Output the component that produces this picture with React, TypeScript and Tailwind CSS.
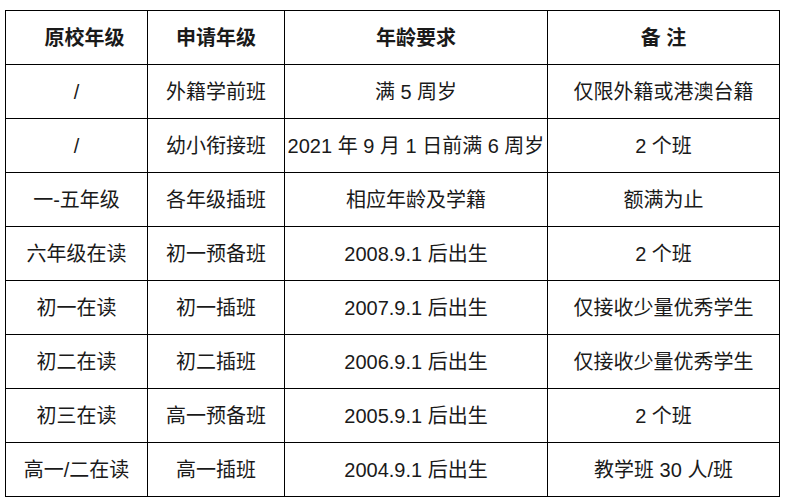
const rows: string[][] = [
  ["/", "外籍学前班", "满 5 周岁", "仅限外籍或港澳台籍"],
  ["/", "幼小衔接班", "2021 年 9 月 1 日前满 6 周岁", "2 个班"],
  ["一-五年级", "各年级插班", "相应年龄及学籍", "额满为止"],
  ["六年级在读", "初一预备班", "2008.9.1 后出生", "2 个班"],
  ["初一在读", "初一插班", "2007.9.1 后出生", "仅接收少量优秀学生"],
  ["初二在读", "初二插班", "2006.9.1 后出生", "仅接收少量优秀学生"],
  ["初三在读", "高一预备班", "2005.9.1 后出生", "2 个班"],
  ["高一/二在读", "高一插班", "2004.9.1 后出生", "教学班 30 人/班"],
];

const headers = ["原校年级", "申请年级", "年龄要求", "备 注"];

export default function App() {
  return (
    <div className="w-[786px] h-[500px] bg-white pt-[10px] pl-[5px] font-['Liberation_Sans','Noto_Sans_CJK_SC',sans-serif] text-[#1a1a1a]">
      <table className="border-collapse table-fixed w-[774px]">
        <colgroup>
          <col className="w-[142px]" />
          <col className="w-[137px]" />
          <col className="w-[263px]" />
          <col className="w-[232px]" />
        </colgroup>
        <thead>
          <tr className="h-[54px]">
            {headers.map((h, i) => (
              <th
                key={h}
                className={i === 0 ? "border border-black text-center text-[20px] font-bold p-0 pl-4" : "border border-black text-center text-[20px] font-bold p-0"}
              >
                {h}
              </th>
            ))}
          </tr>
        </thead>
        <tbody>
          {rows.map((r, i) => (
            <tr key={i} className="h-[54px]">
              {r.map((c, j) => (
                <td key={j} className="border border-black text-center text-[20px] p-0 whitespace-nowrap">
                  {c}
                </td>
              ))}
            </tr>
          ))}
        </tbody>
      </table>
    </div>
  );
}
